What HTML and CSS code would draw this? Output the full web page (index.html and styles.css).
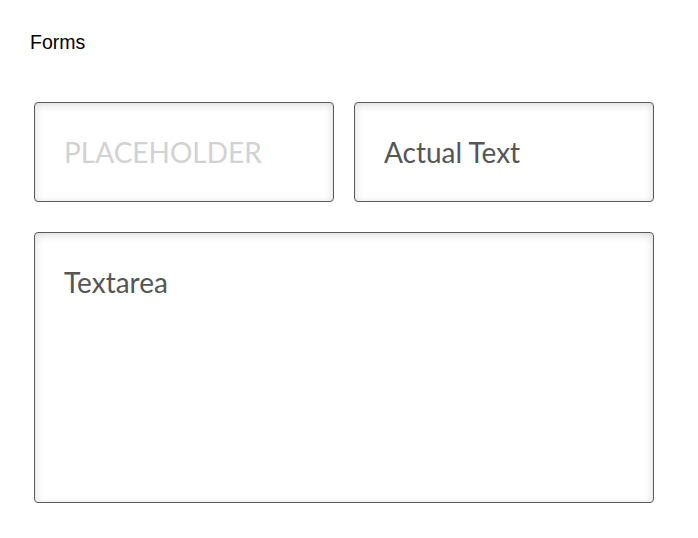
FILE: index.html
```html
<!DOCTYPE html>
<html>
<head>
<meta charset="utf-8">
<link rel="stylesheet" href="styles.css">
</head>
<body>
<div class="page">
  <h1 class="title">Forms</h1>
  <div class="form">
    <div class="row">
      <input class="field" type="text" placeholder="PLACEHOLDER">
      <input class="field" type="text" value="Actual Text">
    </div>
    <textarea class="field area">Textarea</textarea>
  </div>
</div>
</body>
</html>
```
FILE: styles.css
```css
html, body {
  margin: 0;
  padding: 0;
  background: #fff;
}
.page {
  padding: 31px 0 0 30px;
}
.title {
  margin: 0;
  font-family: "Liberation Sans", Arial, sans-serif;
  font-weight: normal;
  font-size: 19.5px;
  line-height: 22px;
  color: #000;
}
.form {
  margin: 49px 0 0 4px;
  width: 620px;
  display: flex;
  flex-direction: column;
  gap: 30px;
}
.row {
  display: flex;
  gap: 20px;
}
.field {
  box-sizing: border-box;
  margin: 0;
  width: 300px;
  height: 100px;
  padding: 0 29px;
  border: 1px solid #5a5a5a;
  border-radius: 4px;
  background: #fff;
  box-shadow: inset 0 2px 9px rgba(0, 0, 0, 0.15);
  font-family: Lato, sans-serif;
  font-size: 28px;
  color: #555;
  outline: none;
}
.field::placeholder {
  color: #d2d2d2;
  opacity: 1;
}
.area {
  width: 620px;
  height: 271px;
  padding: 32px 29px;
  resize: none;
  line-height: 34px;
  display: block;
}
```
